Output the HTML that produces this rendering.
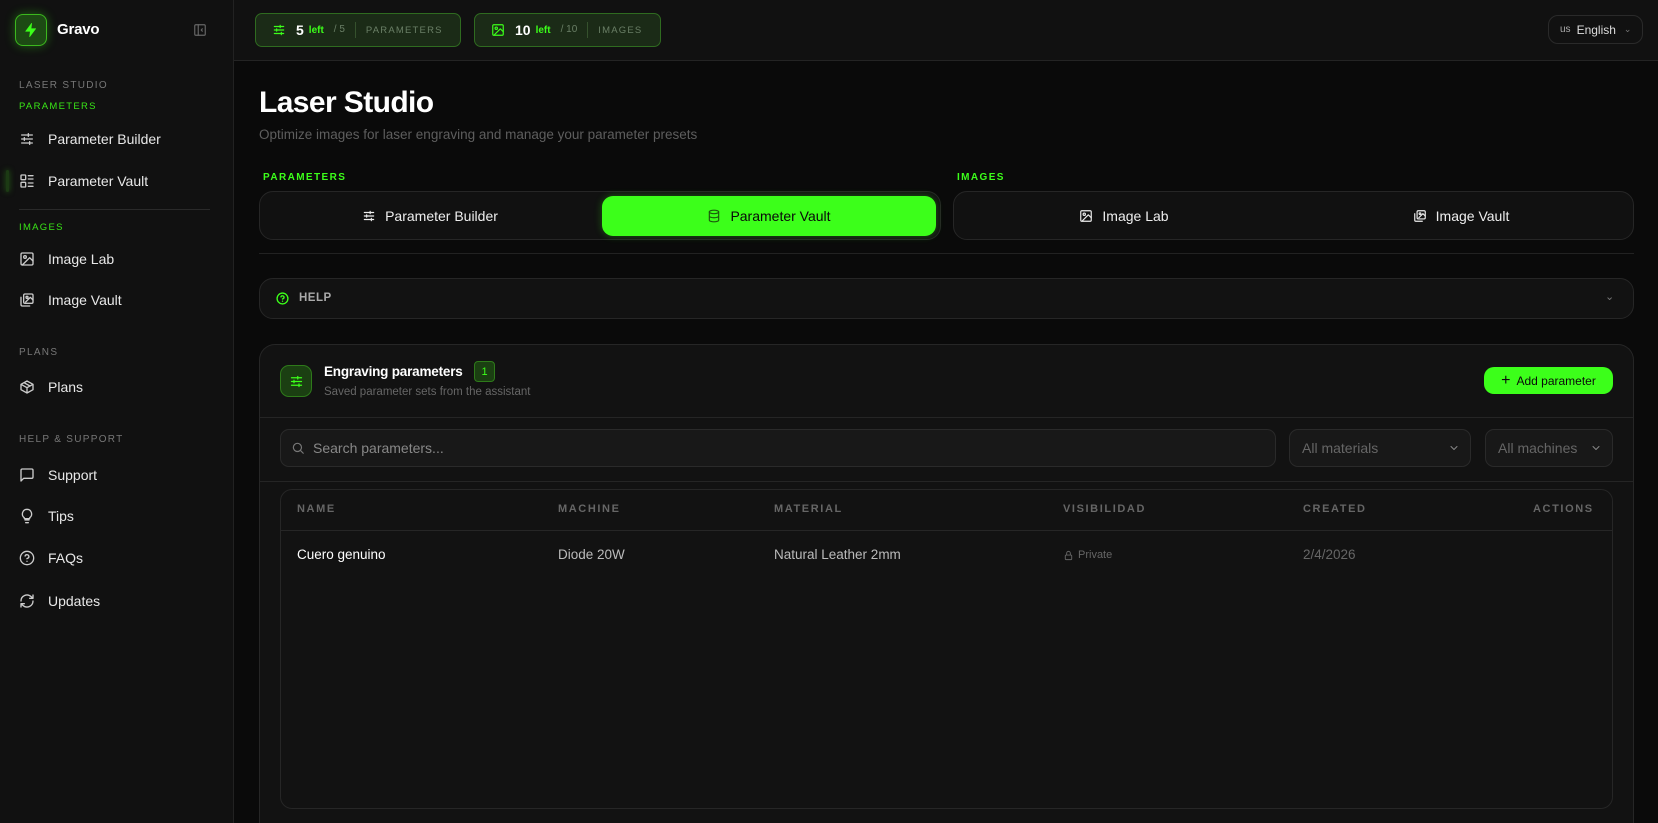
<!DOCTYPE html>
<html><head><meta charset="utf-8"><style>
*{box-sizing:border-box;margin:0;padding:0}
html,body{width:1658px;height:823px;overflow:hidden}
body{background:#0a0a0a;font-family:"Liberation Sans",sans-serif;color:#eee;position:relative}
.a{position:absolute}
svg{fill:none;stroke:currentColor;stroke-width:2;stroke-linecap:round;stroke-linejoin:round}
.side{left:0;top:0;width:234px;height:823px;background:#111;border-right:1px solid #222}
.top{left:234px;top:0;width:1424px;height:61px;background:#111;border-bottom:1px solid #242424}
.sec{left:19px;font-size:10px;letter-spacing:1.3px;color:#777}
.sec.g{color:#39e617}
.item{left:19px;font-size:14px;color:#e8e8e8;display:flex;align-items:center;gap:13px;height:20px}
.item svg{width:16px;height:16px;color:#ccc}
.pill{top:13px;height:34px;border:1px solid #2f6b20;background:#1b2b17;border-radius:7px;display:flex;align-items:center;padding-left:16px;font-size:13px}
.pill b{font-size:14px;color:#fff;margin-left:14px}
.pill .l{color:#3cff1a;font-size:10px;font-weight:bold;margin-left:5px}
.pill .s{color:#6a7f66;font-size:10px;margin-left:10px;padding-right:10px;border-right:1px solid #35512d;height:16px;line-height:16px}
.pill .t{color:#6a7f66;font-size:9.5px;letter-spacing:1.2px;margin-left:10px}
.tabs{top:191px;height:49px;border:1px solid #262626;background:#111;border-radius:14px}
.tab{display:flex;align-items:center;justify-content:center;gap:9px;font-size:14px;color:#eee;position:absolute;top:4px;height:40px}
.tab svg{width:14px;height:14px}
.lbl{font-size:10px;letter-spacing:1.4px;color:#3cff1a;font-weight:bold}
.th{top:503px;font-size:11px;font-weight:bold;letter-spacing:1.6px;color:#666}
.td{top:547px;font-size:13.5px;color:#ddd}
.sel{top:429px;height:38px;border:1px solid #2a2a2a;background:#181818;border-radius:9px;font-size:14px;color:#666;display:flex;align-items:center;padding-left:12px}
.sel svg{position:absolute;right:10px;width:12px;height:12px;color:#888}
</style></head><body>

<div class="a side"></div>
<div class="a top"></div>

<div class="a" style="left:15px;top:14px;width:32px;height:32px;border-radius:8px;background:#1d4a14;border:1px solid #3cb81e;box-shadow:0 0 10px rgba(60,255,26,.35);display:flex;align-items:center;justify-content:center">
<svg width="16" height="16" viewBox="0 0 24 24" style="fill:#3cff1a;stroke:#3cff1a;stroke-width:1"><path d="M13 2L4 14h7l-1 8 9-12h-7z"/></svg></div>
<div class="a" style="left:57px;top:21px;font-size:15px;color:#fff;font-weight:bold;letter-spacing:-.2px">Gravo</div>
<div class="a" style="left:193px;top:23px;color:#666"><svg width="14" height="14" viewBox="0 0 24 24"><rect x="3" y="3" width="18" height="18" rx="2"/><path d="M9 3v18M16 10l-2 2 2 2"/></svg></div>

<div class="a sec" style="top:80px">LASER STUDIO</div>
<div class="a sec g" style="top:101px;font-size:9.5px">PARAMETERS</div>
<div class="a item" style="top:129px"><svg viewBox="0 0 24 24"><path d="M4 6h16M4 12h16M4 18h16M14 4v4M8 10v4M16 16v4"/></svg>Parameter Builder</div>
<div class="a" style="left:6px;top:170px;width:3px;height:22px;background:#1c3a14;border-radius:2px;box-shadow:0 0 6px #2a6a18"></div>
<div class="a item" style="top:171px"><svg viewBox="0 0 24 24"><rect x="3" y="3" width="7" height="7" rx="1"/><rect x="3" y="14" width="7" height="7" rx="1"/><path d="M14 4h7M14 9h7M14 15h7M14 20h7"/></svg>Parameter Vault</div>
<div class="a" style="left:19px;top:209px;width:191px;height:1px;background:#2a2a2a"></div>
<div class="a sec g" style="top:222px;font-size:9.5px">IMAGES</div>
<div class="a item" style="top:249px"><svg viewBox="0 0 24 24"><rect x="3" y="3" width="18" height="18" rx="2"/><circle cx="9" cy="9" r="2"/><path d="M21 15l-5-5L5 21"/></svg>Image Lab</div>
<div class="a item" style="top:290px"><svg viewBox="0 0 24 24"><rect x="7" y="3" width="14" height="14" rx="2"/><path d="M3 8v11a2 2 0 0 0 2 2h11M21 12l-4-4-7 7"/><circle cx="12" cy="8" r="1.5"/></svg>Image Vault</div>
<div class="a sec" style="top:347px">PLANS</div>
<div class="a item" style="top:377px"><svg viewBox="0 0 24 24"><path d="M21 8l-9-5-9 5v8l9 5 9-5z M3 8l9 5 9-5M12 13v8M7.5 5.5l9 5"/></svg>Plans</div>
<div class="a sec" style="top:434px">HELP &amp; SUPPORT</div>
<div class="a item" style="top:465px"><svg viewBox="0 0 24 24"><path d="M21 15a2 2 0 0 1-2 2H7l-4 4V5a2 2 0 0 1 2-2h14a2 2 0 0 1 2 2z"/></svg>Support</div>
<div class="a item" style="top:506px"><svg viewBox="0 0 24 24"><path d="M9 18h6M10 22h4M12 2a7 7 0 0 0-4 12.7V16h8v-1.3A7 7 0 0 0 12 2z"/></svg>Tips</div>
<div class="a item" style="top:548px"><svg viewBox="0 0 24 24"><circle cx="12" cy="12" r="10"/><path d="M9.1 9a3 3 0 0 1 5.8 1c0 2-3 3-3 3M12 17h.01"/></svg>FAQs</div>
<div class="a item" style="top:591px"><svg viewBox="0 0 24 24"><path d="M3 12a9 9 0 0 1 15-6.7L21 8M21 3v5h-5M21 12a9 9 0 0 1-15 6.7L3 16M3 21v-5h5"/></svg>Updates</div>

<div class="a pill" style="left:255px;width:206px"><svg width="14" height="14" viewBox="0 0 24 24" style="color:#3cff1a"><path d="M4 6h16M4 12h16M4 18h16M14 4v4M8 10v4M16 16v4"/></svg><b style="margin-left:10px">5</b><span class="l">left</span><span class="s">/ 5</span><span class="t">PARAMETERS</span></div>
<div class="a pill" style="left:474px;width:187px"><svg width="14" height="14" viewBox="0 0 24 24" style="color:#3cff1a"><rect x="3" y="3" width="18" height="18" rx="2"/><circle cx="9" cy="9" r="2"/><path d="M21 15l-5-5L5 21"/></svg><b style="margin-left:10px">10</b><span class="l">left</span><span class="s">/ 10</span><span class="t">IMAGES</span></div>
<div class="a" style="left:1548px;top:15px;width:95px;height:29px;border:1px solid #2a2a2a;border-radius:10px;display:flex;align-items:center;padding-left:11px;font-size:12px;color:#ddd"><span style="font-size:10px;color:#aaa;margin-right:6px">us</span>English<span style="margin-left:8px;color:#777;font-size:9px">&#8964;</span></div>

<div class="a" style="left:259px;top:86px;font-size:30px;font-weight:bold;color:#fff;letter-spacing:-.6px">Laser Studio</div>
<div class="a" style="left:259px;top:127px;font-size:13.5px;color:#5e5e5e">Optimize images for laser engraving and manage your parameter presets</div>

<div class="a lbl" style="left:263px;top:172px">PARAMETERS</div>
<div class="a lbl" style="left:957px;top:172px">IMAGES</div>

<div class="a tabs" style="left:259px;width:682px">
 <div class="tab" style="left:4px;width:332px"><svg viewBox="0 0 24 24"><path d="M4 6h16M4 12h16M4 18h16M14 4v4M8 10v4M16 16v4"/></svg>Parameter Builder</div>
 <div class="tab" style="left:342px;width:334px;background:#3cff1a;color:#0a0a0a;border-radius:11px;box-shadow:0 0 8px rgba(60,255,26,.3)"><svg viewBox="0 0 24 24" style="color:#1c5a0c"><ellipse cx="12" cy="5" rx="8" ry="3"/><path d="M4 5v14c0 1.7 3.6 3 8 3s8-1.3 8-3V5M4 12c0 1.7 3.6 3 8 3s8-1.3 8-3"/></svg>Parameter Vault</div>
</div>
<div class="a tabs" style="left:953px;width:681px">
 <div class="tab" style="left:4px;width:332px"><svg viewBox="0 0 24 24"><rect x="3" y="3" width="18" height="18" rx="2"/><circle cx="9" cy="9" r="2"/><path d="M21 15l-5-5L5 21"/></svg>Image Lab</div>
 <div class="tab" style="left:340px;width:334px"><svg viewBox="0 0 24 24"><rect x="7" y="3" width="14" height="14" rx="2"/><path d="M3 8v11a2 2 0 0 0 2 2h11M21 12l-4-4-7 7"/><circle cx="12" cy="8" r="1.5"/></svg>Image Vault</div>
</div>
<div class="a" style="left:259px;top:253px;width:1375px;height:1px;background:#222"></div>

<div class="a" style="left:259px;top:278px;width:1375px;height:41px;border:1px solid #262626;background:#121212;border-radius:14px"></div>
<div class="a" style="left:276px;top:292px;color:#3cff1a"><svg width="13" height="13" viewBox="0 0 24 24" style="stroke-width:2.5"><circle cx="12" cy="12" r="10"/><path d="M9.1 9a3 3 0 0 1 5.8 1c0 2-3 3-3 3M12 17h.01"/></svg></div>
<div class="a" style="left:299px;top:292px;font-size:11.5px;font-weight:bold;color:#aaa;letter-spacing:.5px">HELP</div>
<div class="a" style="left:1605px;top:290px;color:#777;font-size:11px">&#8964;</div>

<div class="a" style="left:259px;top:344px;width:1375px;height:479px;border:1px solid #262626;border-bottom:none;background:#121212;border-radius:16px 16px 0 0"></div>
<div class="a" style="left:280px;top:365px;width:32px;height:32px;border-radius:9px;background:#1b3f12;border:1px solid #2e7a1a;display:flex;align-items:center;justify-content:center;color:#3cff1a"><svg width="15" height="15" viewBox="0 0 24 24"><path d="M4 6h16M4 12h16M4 18h16M14 4v4M8 10v4M16 16v4"/></svg></div>
<div class="a" style="left:324px;top:364px;font-size:13.5px;font-weight:bold;color:#fff;letter-spacing:-.2px">Engraving parameters</div>
<div class="a" style="left:474px;top:361px;width:21px;height:21px;border:1px solid #2e7a1a;background:#1b3f12;border-radius:4px;color:#3cff1a;font-size:11px;display:flex;align-items:center;justify-content:center">1</div>
<div class="a" style="left:324px;top:386px;font-size:11.5px;color:#666">Saved parameter sets from the assistant</div>
<div class="a" style="left:1484px;top:367px;width:129px;height:27px;background:#3cff1a;border-radius:10px;color:#0a0a0a;font-size:12px;display:flex;align-items:center;justify-content:center;gap:6px"><span style="font-size:16px;line-height:12px">+</span>Add parameter</div>
<div class="a" style="left:260px;top:417px;width:1373px;height:1px;background:#252525"></div>

<div class="a sel" style="left:280px;width:996px;padding-left:32px;color:#888"><svg viewBox="0 0 24 24" style="left:10px;right:auto;width:14px;height:14px;color:#777;position:absolute"><circle cx="11" cy="11" r="7"/><path d="M21 21l-5-5"/></svg>Search parameters...</div>
<div class="a sel" style="left:1289px;width:182px">All materials<svg viewBox="0 0 24 24"><path d="M6 9l6 6 6-6"/></svg></div>
<div class="a sel" style="left:1485px;width:128px">All machines<svg viewBox="0 0 24 24"><path d="M6 9l6 6 6-6"/></svg></div>
<div class="a" style="left:260px;top:481px;width:1373px;height:1px;background:#252525"></div>

<div class="a" style="left:280px;top:489px;width:1333px;height:320px;border:1px solid #262626;border-radius:12px;background:#121212"></div>
<div class="a" style="left:281px;top:530px;width:1331px;height:1px;background:#262626"></div>
<div class="a th" style="left:297px">NAME</div>
<div class="a th" style="left:558px">MACHINE</div>
<div class="a th" style="left:774px">MATERIAL</div>
<div class="a th" style="left:1063px">VISIBILIDAD</div>
<div class="a th" style="left:1303px">CREATED</div>
<div class="a th" style="left:1533px">ACTIONS</div>
<div class="a td" style="left:297px;color:#fff">Cuero genuino</div>
<div class="a td" style="left:558px;color:#bbb">Diode 20W</div>
<div class="a td" style="left:774px;color:#bbb">Natural Leather 2mm</div>
<div class="a td" style="left:1063px;font-size:11px;color:#666;top:549px;display:flex;align-items:center;gap:4px"><svg width="11" height="11" viewBox="0 0 24 24"><rect x="5" y="11" width="14" height="10" rx="2"/><path d="M8 11V7a4 4 0 0 1 8 0v4"/></svg>Private</div>
<div class="a td" style="left:1303px;color:#666">2/4/2026</div>
</body></html>
